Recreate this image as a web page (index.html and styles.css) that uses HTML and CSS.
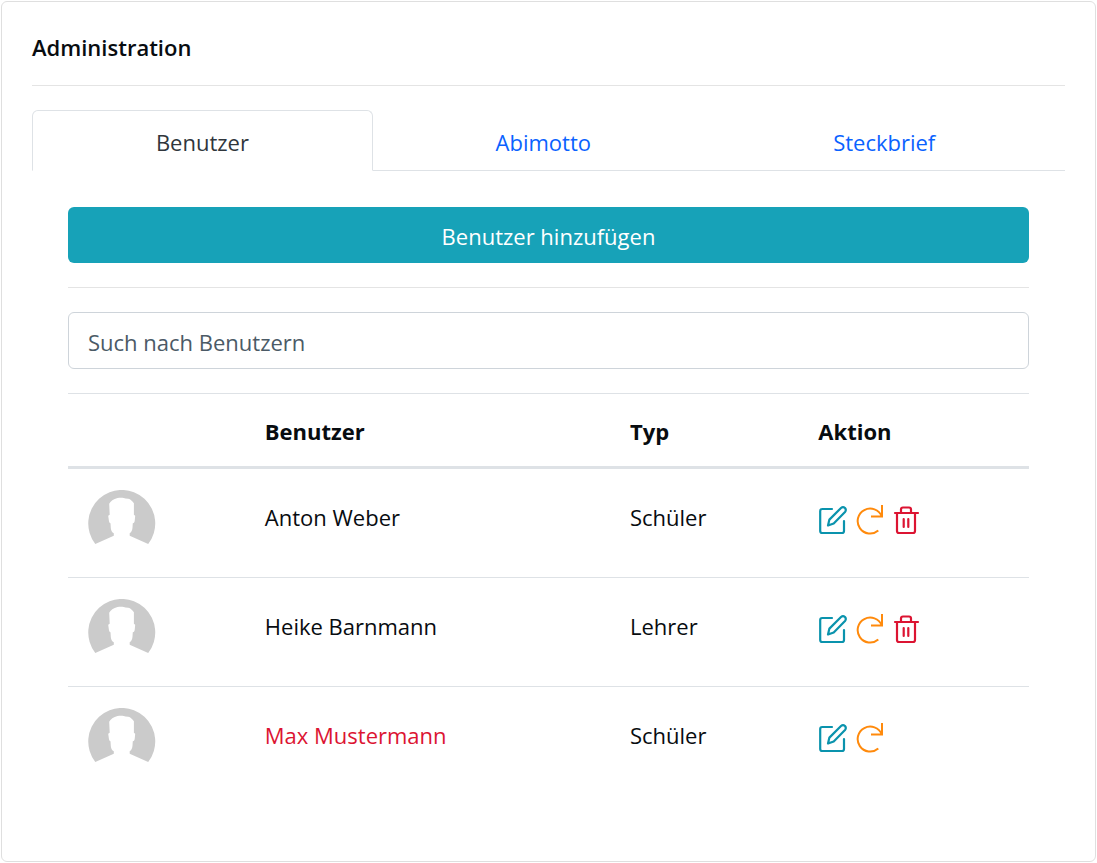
FILE: index.html
```html
<!DOCTYPE html>
<html lang="de">
<head>
<meta charset="utf-8">
<meta name="viewport" content="width=device-width, initial-scale=1">
<title>Administration</title>
<link rel="stylesheet" href="styles.css">
</head>
<body>
<svg class="sprite" aria-hidden="true">
  <symbol id="avatar" viewBox="0 0 68 68">
    <path fill="#cbcbcb" d="M7.3 54A33.5 33.5 0 1 1 60.2 54L41.7 45.8V43.3C43.6 42 44.4 40 44.5 37.5L44.8 33.3C46.2 33 46.7 32 46.8 30L47.2 25.8L45.9 24.7V13.2C44.5 11.5 42.5 9 40.3 8.7L37.5 8.5C36 7.6 32 7.5 29.5 8.1C25.5 9 22.5 11.3 21.2 13.8L21.7 24.7L20.2 25.8L20.8 30C21 32 21.5 33 22.5 33.3L22.8 38C23 40.5 24 42.3 25.8 43.3V45.8Z"/>
  </symbol>
  <symbol id="edit" viewBox="0 0 28 30">
    <g fill="none" stroke="#0a93ad" stroke-width="2.2" stroke-linecap="round" stroke-linejoin="round">
      <path d="M13 4H3.200Q1.200 4 1.200 6V26Q1.200 28 3.200 28H23Q25 28 25 26V16"/>
      <path d="M9 20.500L10.400 14.600L22 3Q24 1.200 26 3Q27.600 5 26 7L14.700 18.500Z"/>
    </g>
  </symbol>
  <symbol id="reset" viewBox="0 0 28 30">
    <path fill="none" stroke="#ff8a0c" stroke-width="2" d="M26 0V11.500H15M25.800 11.500A12.500 12.500 0 1 0 22.300 25.600"/>
  </symbol>
  <symbol id="trash" viewBox="0 0 28 30">
    <g fill="none" stroke="#dc1432" stroke-width="2.2" stroke-linecap="round" stroke-linejoin="round">
      <path d="M2 8H25M4 8V26Q4 28 6 28H20Q22 28 22 26V8M8 8V4.500Q8 2.500 10 2.500H16Q18 2.500 18 4.500V8M10.700 14V22M15.300 14V22"/>
    </g>
  </symbol>
</svg>
<main class="card">
  <h1 class="title">Administration</h1>
  <nav class="tabs">
    <a class="tab active" href="#benutzer" aria-current="page">Benutzer</a>
    <a class="tab" href="#abimotto">Abimotto</a>
    <a class="tab" href="#steckbrief">Steckbrief</a>
  </nav>
  <section class="panel" id="benutzer">
    <button class="add" type="button">Benutzer hinzufügen</button>
    <hr class="rule">
    <input class="search" type="search" placeholder="Such nach Benutzern" aria-label="Such nach Benutzern">
    <table class="users">
      <colgroup><col class="col-image"><col class="col-name"><col class="col-type"><col></colgroup>
      <thead>
        <tr><th></th><th scope="col">Benutzer</th><th scope="col">Typ</th><th scope="col">Aktion</th></tr>
      </thead>
      <tbody>
        <tr>
          <td class="image-cell"><svg class="avatar" aria-hidden="true"><use href="#avatar"/></svg></td>
          <td>Anton Weber</td>
          <td>Schüler</td>
          <td class="action-cell"><div class="actions">
            <button class="action" type="button" aria-label="Bearbeiten"><svg class="icon"><use href="#edit"/></svg></button>
            <button class="action" type="button" aria-label="Zurücksetzen"><svg class="icon"><use href="#reset"/></svg></button>
            <button class="action" type="button" aria-label="Löschen"><svg class="icon"><use href="#trash"/></svg></button>
          </div></td>
        </tr>
        <tr>
          <td class="image-cell"><svg class="avatar" aria-hidden="true"><use href="#avatar"/></svg></td>
          <td>Heike Barnmann</td>
          <td>Lehrer</td>
          <td class="action-cell"><div class="actions">
            <button class="action" type="button" aria-label="Bearbeiten"><svg class="icon"><use href="#edit"/></svg></button>
            <button class="action" type="button" aria-label="Zurücksetzen"><svg class="icon"><use href="#reset"/></svg></button>
            <button class="action" type="button" aria-label="Löschen"><svg class="icon"><use href="#trash"/></svg></button>
          </div></td>
        </tr>
        <tr>
          <td class="image-cell"><svg class="avatar" aria-hidden="true"><use href="#avatar"/></svg></td>
          <td class="flagged">Max Mustermann</td>
          <td>Schüler</td>
          <td class="action-cell"><div class="actions">
            <button class="action" type="button" aria-label="Bearbeiten"><svg class="icon"><use href="#edit"/></svg></button>
            <button class="action" type="button" aria-label="Zurücksetzen"><svg class="icon"><use href="#reset"/></svg></button>
          </div></td>
        </tr>
      </tbody>
    </table>
  </section>
</main>
</body>
</html>
```
FILE: styles.css
```css
* {
  box-sizing: border-box;
}

body {
  margin: 0;
  padding: 1px;
  min-height: 100vh;
  display: flex;
  background: #fff;
  color: #080c10;
  font-family: "Segoe UI", "Open Sans", "Noto Sans", sans-serif;
  font-size: 22px;
  line-height: 36px;
}

.sprite {
  display: none;
}

.card {
  flex: 1;
  min-width: 0;
  padding: 27px 30px;
  border: 1px solid #dfdfdf;
  border-radius: 6px;
}

.title {
  margin: 0 0 24px;
  padding-bottom: 20px;
  border-bottom: 1px solid #e4e4e4;
  font-size: 22px;
  line-height: 36px;
  font-weight: 600;
}

.tabs {
  display: flex;
  border-bottom: 1px solid #dee2e6;
}

.tab {
  flex: 0 0 33%;
  padding: 13px 12px 10px;
  margin-bottom: -1px;
  border: 1px solid transparent;
  border-radius: 6px 6px 0 0;
  color: #0a62ff;
  text-align: center;
  text-decoration: none;
}

.tab.active {
  border-color: #dee2e6;
  border-bottom-color: #fff;
  background: #fff;
  color: #30363c;
}

.panel {
  padding: 36px 36px 0;
}

.add {
  display: block;
  width: 100%;
  padding: 11px 10px 9px;
  border: 0;
  border-radius: 6px;
  background: #17a2b8;
  color: #fff;
  font: inherit;
}

.rule {
  margin: 24px 0;
  border: 0;
  border-top: 1px solid #e4e4e4;
}

.search {
  display: block;
  width: 100%;
  height: 57px;
  margin-bottom: 24px;
  padding: 2px 19px 0;
  border: 1px solid #ced4da;
  border-radius: 6px;
  background: #fff;
  color: #495057;
  font: inherit;
  appearance: none;
}

.search::placeholder {
  color: #4b5a66;
  opacity: 1;
}

.users {
  width: 100%;
  table-layout: fixed;
  border-collapse: separate;
  border-spacing: 0;
}

.col-image {
  width: 18.4%;
}

.col-name {
  width: 38%;
}

.col-type {
  width: 19.6%;
}

th {
  padding: 19px 20px 17px;
  border-top: 1px solid #dee2e6;
  border-bottom: 3px solid #dee2e6;
  text-align: left;
  font-weight: 700;
}

td {
  padding: 20px 20px 32px;
  vertical-align: middle;
}

.image-cell {
  padding: 21px 20px 19px;
}

.action-cell {
  padding: 20px 20px 26px 21px;
}

tr + tr td {
  border-top: 1px solid #dee2e6;
}

.flagged {
  color: #dc1432;
}

.avatar {
  display: block;
  width: 68px;
  height: 68px;
}

.actions {
  display: flex;
  gap: 9px;
}

.action {
  padding: 0;
  border: 0;
  background: none;
}

.icon {
  display: block;
  width: 28px;
  height: 30px;
}
```
